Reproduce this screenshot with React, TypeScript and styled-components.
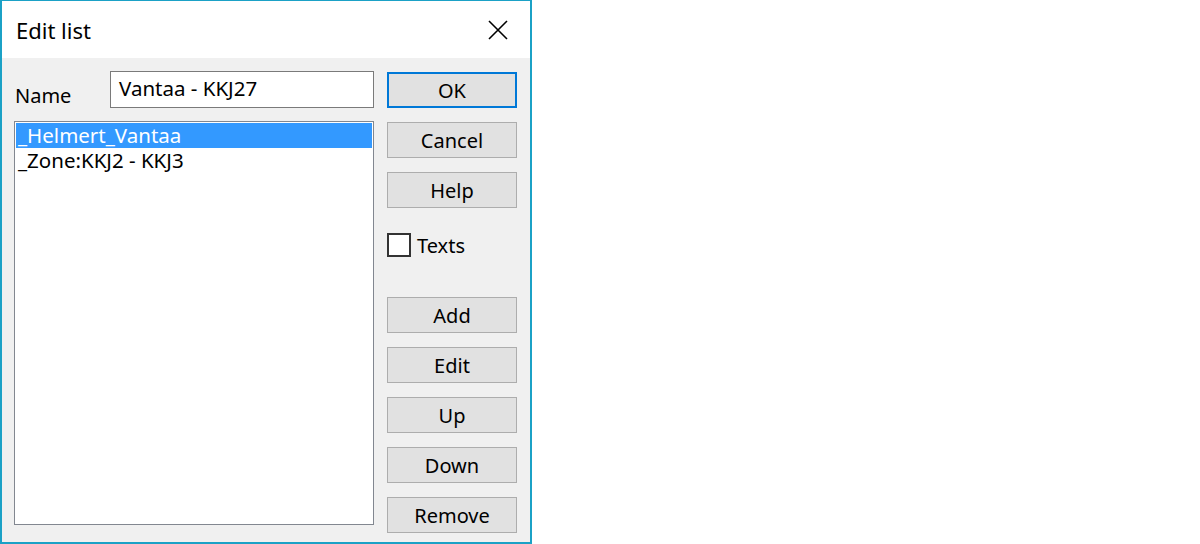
import React from "react";
import styled, { createGlobalStyle } from "styled-components";

const Global = createGlobalStyle`
  html, body { margin: 0; padding: 0; background: #ffffff; }
  body { font-family: "Noto Sans", "Open Sans", "Liberation Sans", sans-serif; color: #000; }
`;

const Dialog = styled.div`
  box-sizing: border-box;
  width: 532px;
  height: 544px;
  border: 2px solid #1ba1c6;
  border-top-width: 1px;
  display: flex;
  flex-direction: column;
  background: #f0f0f0;
`;

const TitleBar = styled.div`
  height: 57px;
  flex: none;
  background: #ffffff;
  display: flex;
  align-items: center;
  justify-content: space-between;
  padding: 0 22px 0 14px;
`;

const Title = styled.div`
  font-size: 22px;
  margin-top: 1px;
`;

const Close = styled.svg`
  width: 20px;
  height: 20px;
  display: block;
`;

const Body = styled.div`
  flex: 1;
  min-height: 0;
  display: grid;
  grid-template-columns: 360px 130px;
  grid-template-rows: minmax(0, 1fr);
  column-gap: 13px;
  padding: 13px 13px 17px 12px;
`;

const LeftCol = styled.div`
  display: flex;
  flex-direction: column;
  gap: 13px;
  min-height: 0;
`;

const NameRow = styled.div`
  display: flex;
  align-items: flex-end;
  justify-content: space-between;
`;

const Label = styled.div`
  font-size: 20px;
  line-height: 24px;
  margin: 0 0 0 1px;
`;

const Input = styled.div`
  box-sizing: border-box;
  width: 264px;
  height: 37px;
  border: 1px solid #7a7a7a;
  background: #fff;
  font-size: 20.5px;
  line-height: 24px;
  padding: 4px 8px 0 8px;
`;

const List = styled.div`
  box-sizing: border-box;
  flex: 1;
  min-height: 0;
  border: 1px solid #828790;
  background: #fff;
  padding: 1px;
`;

const Item = styled.div<{ $selected?: boolean }>`
  height: 25px;
  font-size: 20.5px;
  line-height: 25px;
  padding-left: 2px;
  white-space: pre;
  background: ${(p) => (p.$selected ? "#3399ff" : "transparent")};
  color: ${(p) => (p.$selected ? "#fff" : "#000")};
`;

const RightCol = styled.div`
  display: flex;
  flex-direction: column;
  gap: 14px;
  padding-top: 1px;
  min-height: 0;
`;

const Button = styled.button<{ $default?: boolean }>`
  box-sizing: border-box;
  flex: none;
  width: 130px;
  height: 36px;
  margin: 0;
  padding: 0;
  font-family: inherit;
  font-size: 20px;
  color: #000;
  background: #e1e1e1;
  border: ${(p) => (p.$default ? "2px solid #0078d7" : "1px solid #adadad")};
  display: flex;
  align-items: center;
  justify-content: center;
`;

const CheckRow = styled.label`
  flex: none;
  display: flex;
  align-items: center;
  gap: 6px;
  font-size: 20px;
  height: 24px;
  margin: 11px 0 26px 0;
`;

const Box = styled.span`
  box-sizing: border-box;
  width: 24px;
  height: 24px;
  border: 2px solid #333333;
  background: #fff;
  display: block;
`;

export default function App() {
  return (
    <>
      <Global />
      <Dialog>
        <TitleBar>
          <Title>Edit list</Title>
          <Close viewBox="0 0 20 20">
            <path d="M1 1 L19 19 M19 1 L1 19" stroke="#000" strokeWidth="1.6" fill="none" />
          </Close>
        </TitleBar>
        <Body>
          <LeftCol>
            <NameRow>
              <Label>Name</Label>
              <Input>Vantaa - KKJ27</Input>
            </NameRow>
            <List>
              <Item $selected>_Helmert_Vantaa</Item>
              <Item>_Zone:KKJ2 - KKJ3</Item>
            </List>
          </LeftCol>
          <RightCol>
            <Button $default>OK</Button>
            <Button>Cancel</Button>
            <Button>Help</Button>
            <CheckRow>
              <Box />
              Texts
            </CheckRow>
            <Button>Add</Button>
            <Button>Edit</Button>
            <Button>Up</Button>
            <Button>Down</Button>
            <Button>Remove</Button>
          </RightCol>
        </Body>
      </Dialog>
    </>
  );
}
